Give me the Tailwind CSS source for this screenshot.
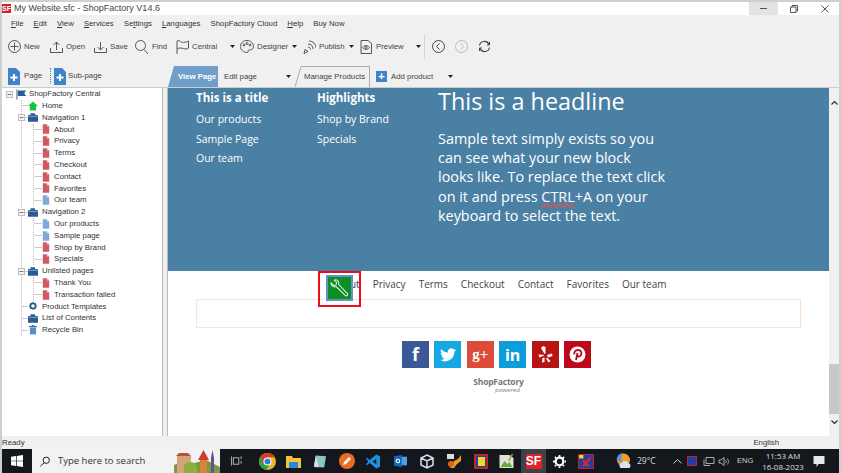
<!DOCTYPE html>
<html lang="en">
  <head>
    <meta charset="UTF-8" />
    <title>ShopFactory</title>
    <script src="https://cdn.jsdelivr.net/npm/@tailwindcss/browser@4"></script>
  </head>
  <body class="w-[841px] h-[473px] overflow-hidden bg-[#cfcfcf] font-['Liberation_Sans',sans-serif] text-[7.800px] text-[#333]">
    <svg class="hidden">
      <symbol id="red" viewBox="0 0 10 12"><path d="M1 0h5l3 3v9H1z" fill="#cf5a63"/><path d="M6 0v3h3z" fill="#f3c9cc"/></symbol>
      <symbol id="blue" viewBox="0 0 10 12"><path d="M1 0h5l3 3v9H1z" fill="#7fa9d8"/><path d="M6 0v3h3z" fill="#d5e3f3"/></symbol>
      <symbol id="folder" viewBox="0 0 12 10"><path d="M3 0h5l1 2h3v8H0V2h3z" fill="#2a5b93"/><path d="M0 3h12v1H0z" fill="#8fb1d6"/></symbol>
      <symbol id="minus" viewBox="0 0 9 9"><rect x=".5" y=".5" width="8" height="8" fill="#f4f4f4" stroke="#b0b0b0"/><path d="M2 4.500h5" stroke="#555"/></symbol>
      <symbol id="page" viewBox="0 0 12 18"><path d="M0 1h8l4 4v13H0z" fill="#3f83c8"/><path d="M6 7v7M2.500 10.500h7" stroke="#fff" stroke-width="2"/></symbol>
      <symbol id="drop" viewBox="0 0 5 3"><path d="M0 0h5L2.500 3z" fill="#222"/></symbol>
    </svg>

    <div class="h-[471px] mt-[2px] ml-[2px] flex flex-col bg-[#f0f0f0] w-[837px]">
      <!-- title bar -->
      <div class="h-[13px] shrink-0 bg-white flex items-center text-[9px] text-[#444]">
        <span class="w-[9px] h-[9px] bg-[#d3202a] text-white text-[7px] font-bold leading-[9px] text-center">SF</span>
        <span class="ml-[3px]">My Website.sfc - ShopFactory V14.6</span>
        <div class="ml-auto flex items-center h-full text-[#555]">
          <span class="w-[29px] h-full bg-[#e3e3e3] flex items-center justify-center"><span class="w-[7px] h-px bg-[#555]"></span></span>
          <svg class="w-[8px] h-[8px] ml-[12px]" viewBox="0 0 8 8"><path d="M.5 2h5.500v5.500H.5zM2 2V.5h5.500V6H6" fill="none" stroke="#555"/></svg>
          <svg class="w-[8px] h-[8px] ml-[23px] mr-[10px]" viewBox="0 0 8 8"><path d="M.5.5l7 7M7.500.5l-7 7" stroke="#555"/></svg>
        </div>
      </div>
      <!-- menu -->
      <div class="h-[18px] shrink-0 flex items-center gap-[10px] pl-[9px] text-[#333]">
        <span><u>F</u>ile</span><span><u>E</u>dit</span><span><u>V</u>iew</span><span><u>S</u>ervices</span><span>Se<u>t</u>tings</span><span><u>L</u>anguages</span><span>ShopFactory Cloud</span><span><u>H</u>elp</span><span>Buy Now</span>
      </div>
      <!-- toolbar -->
      <div class="h-[27px] shrink-0 flex items-center text-[#444] whitespace-nowrap">
        <svg class="w-[13px] h-[13px] ml-[6px]" viewBox="0 0 13 13" fill="none" stroke="#555"><circle cx="6.500" cy="6.500" r="6"/><path d="M6.500 2.500v8M2.500 6.500h8"/></svg>
        <span class="ml-[3px] w-[26px]">New</span>
        <svg class="w-[13px] h-[12px]" viewBox="0 0 13 12" fill="none" stroke="#555"><path d="M6.500 9V1M3.500 4l3-3 3 3M.5 7v4.500h12V7"/></svg>
        <span class="ml-[3px] w-[28px]">Open</span>
        <svg class="w-[13px] h-[12px]" viewBox="0 0 13 12" fill="none" stroke="#555"><path d="M6.500 1v8M3.500 6l3 3 3-3M.5 7v4.500h12V7"/></svg>
        <span class="ml-[3px] w-[25px]">Save</span>
        <svg class="w-[13px] h-[14px]" viewBox="0 0 13 14" fill="none" stroke="#555"><circle cx="5.500" cy="5.500" r="5"/><path d="M9 9.500l4 4.500"/></svg>
        <span class="ml-[4px] w-[24px]">Find</span>
        <svg class="w-[13px] h-[14px]" viewBox="0 0 13 14" fill="none" stroke="#555"><path d="M1 14V1c3-1.500 4 2 6.500 1.500S11 2 12.500 1v7c-2 1.500-3 1-5 .5S3 7.500 1 9"/></svg>
        <span class="ml-[3px] w-[38px]">Central</span>
        <svg class="w-[5px] h-[3px]"><use href="#drop"/></svg>
        <svg class="w-[14px] h-[13px] ml-[5px]" viewBox="0 0 14 13" fill="none" stroke="#555"><path d="M7 .5C3 .5.5 3 .5 6.500S3.500 12.500 7 12.500c1.500 0 1-2 1.500-2.500s4.500 1 5-3.500C13.500 3 10.500.5 7 .5z"/><circle cx="4" cy="5" r="1"/><circle cx="7" cy="3.500" r="1"/><circle cx="10" cy="5" r="1"/></svg>
        <span class="ml-[3px] w-[35px]">Designer</span>
        <svg class="w-[5px] h-[3px]"><use href="#drop"/></svg>
        <svg class="w-[13px] h-[14px] ml-[6px]" viewBox="0 0 13 14" fill="none" stroke="#555"><path d="M1 13.500l1-4 3 2zM5 4c3 0 5 2 5 5M6 1c4 0 7 3 7 7M5 7c1.500 0 2.500 1 2.500 2.500"/></svg>
        <span class="ml-[3px] w-[30px]">Publish</span>
        <svg class="w-[5px] h-[3px]"><use href="#drop"/></svg>
        <svg class="w-[12px] h-[14px] ml-[6px]" viewBox="0 0 12 14" fill="none" stroke="#555"><path d="M1 .5h7l3.500 3v10H1z"/><path d="M2.500 7.500c2-2.500 5-2.500 7 0-2 2.500-5 2.500-7 0z"/><circle cx="6" cy="7.500" r="1"/></svg>
        <span class="ml-[4px] w-[40px]">Preview</span>
        <svg class="w-[5px] h-[3px]"><use href="#drop"/></svg>
        <span class="w-px h-[25px] bg-[#d4d4d4] ml-[3px]"></span>
        <svg class="w-[13px] h-[13px] ml-[7px]" viewBox="0 0 13 13" fill="none" stroke="#444"><circle cx="6.500" cy="6.500" r="6"/><path d="M7.500 3.500l-3 3 3 3"/></svg>
        <svg class="w-[13px] h-[13px] ml-[10px]" viewBox="0 0 13 13" fill="none" stroke="#bbb"><circle cx="6.500" cy="6.500" r="6"/><path d="M5.500 3.500l3 3-3 3"/></svg>
        <svg class="w-[13px] h-[13px] ml-[10px]" viewBox="0 0 13 13" fill="none" stroke="#444" stroke-width="1.200"><path d="M1.500 5.500A5 5 0 0 1 11 4.500M11.500 7.500A5 5 0 0 1 2 8.500"/><path d="M11.500 2v3H9M1.500 11V8H4" stroke-width="1"/></svg>
      </div>
      <!-- page/tab row -->
      <div class="h-[28px] shrink-0 flex items-end whitespace-nowrap text-[#444] border-b border-[#ccc]">
        <div class="w-[166px] h-[27px] pt-[4px] flex items-center">
          <svg class="w-[12px] h-[18px] ml-[6px]"><use href="#page"/></svg>
          <span class="ml-[4px] w-[26px]">Page</span>
          <span class="h-[16px] w-[3px] border-l border-dotted border-[#3f83c8]"></span>
          <svg class="w-[12px] h-[18px] ml-[1px]"><use href="#page"/></svg>
          <span class="ml-[2px]">Sub-page</span>
        </div>
        <div class="flex-1 flex items-end h-[21px]">
          <span class="h-full w-[50px] pl-[10px] bg-[#6f9fc9] text-white font-bold flex items-center [clip-path:polygon(6px_0,100%_0,100%_100%,0_100%)]">View Page</span>
          <span class="ml-[6px] w-[62px] self-center">Edit page</span>
          <svg class="w-[5px] h-[3px] self-center"><use href="#drop"/></svg>
          <div class="ml-[4px] w-[75px] h-full flex">
            <svg class="w-[6px] h-[21px] shrink-0" viewBox="0 0 6 21" fill="none" stroke="#aaa"><path d="M0 21L6 .5"/></svg>
            <span class="flex-1 pl-[3px] border-t border-r border-[#aaa] flex items-center">Manage Products</span>
          </div>
          <span class="ml-[6px] w-[11px] h-[11px] self-center bg-[#3f83c8] text-white flex items-center justify-center font-bold text-[11px] leading-none">+</span>
          <span class="ml-[4px] w-[57px] self-center">Add product</span>
          <svg class="w-[5px] h-[3px] self-center"><use href="#drop"/></svg>
        </div>
      </div>
      <!-- main -->
      <div class="flex-1 flex min-h-0">
        <div class="w-[161px] bg-white border-r border-[#bbb] text-[#333] overflow-hidden whitespace-nowrap">
          <div class="flex items-center h-[12px] pl-[4px]"><svg class="w-[7px] h-[7px]"><use href="#minus"/></svg><svg class="w-[11px] h-[11px] ml-[3px]" viewBox="0 0 12 11"><path d="M1 0v11" stroke="#2a5b93"/><path d="M2 1h9l-2 3 2 3H2z" fill="#2a5b93"/></svg><span class="ml-[2px]">ShopFactory Central</span></div>
          <div class="ml-[19px] border-l border-dotted border-[#bbb]">
            <div class="flex items-center h-[11.800px]"><span class="w-[6px] h-px bg-[#ccc]"></span><svg class="w-[10px] h-[10px]" viewBox="0 0 11 10"><path d="M5.500 0L11 5H9v5H2V5H0z" fill="#17c53c"/></svg><span class="ml-[4px]">Home</span></div>
            <div class="flex items-center h-[11.800px] -ml-[4px]"><svg class="w-[7px] h-[7px]"><use href="#minus"/></svg><span class="w-[3px] h-px bg-[#ccc]"></span><svg class="w-[10px] h-[9px]"><use href="#folder"/></svg><span class="ml-[4px]">Navigation 1</span></div>
            <div class="ml-[11px] border-l border-dotted border-[#bbb]">
              <div class="flex items-center h-[11.800px]"><span class="w-[8px] h-px bg-[#ccc]"></span><svg class="w-[8px] h-[10px]"><use href="#red"/></svg><span class="ml-[4px]">About</span></div>
              <div class="flex items-center h-[11.800px]"><span class="w-[8px] h-px bg-[#ccc]"></span><svg class="w-[8px] h-[10px]"><use href="#red"/></svg><span class="ml-[4px]">Privacy</span></div>
              <div class="flex items-center h-[11.800px]"><span class="w-[8px] h-px bg-[#ccc]"></span><svg class="w-[8px] h-[10px]"><use href="#red"/></svg><span class="ml-[4px]">Terms</span></div>
              <div class="flex items-center h-[11.800px]"><span class="w-[8px] h-px bg-[#ccc]"></span><svg class="w-[8px] h-[10px]"><use href="#red"/></svg><span class="ml-[4px]">Checkout</span></div>
              <div class="flex items-center h-[11.800px]"><span class="w-[8px] h-px bg-[#ccc]"></span><svg class="w-[8px] h-[10px]"><use href="#red"/></svg><span class="ml-[4px]">Contact</span></div>
              <div class="flex items-center h-[11.800px]"><span class="w-[8px] h-px bg-[#ccc]"></span><svg class="w-[8px] h-[10px]"><use href="#red"/></svg><span class="ml-[4px]">Favorites</span></div>
              <div class="flex items-center h-[11.800px]"><span class="w-[8px] h-px bg-[#ccc]"></span><svg class="w-[8px] h-[10px]"><use href="#blue"/></svg><span class="ml-[4px]">Our team</span></div>
            </div>
            <div class="flex items-center h-[11.800px] -ml-[4px]"><svg class="w-[7px] h-[7px]"><use href="#minus"/></svg><span class="w-[3px] h-px bg-[#ccc]"></span><svg class="w-[10px] h-[9px]"><use href="#folder"/></svg><span class="ml-[4px]">Navigation 2</span></div>
            <div class="ml-[11px] border-l border-dotted border-[#bbb]">
              <div class="flex items-center h-[11.800px]"><span class="w-[8px] h-px bg-[#ccc]"></span><svg class="w-[8px] h-[10px]"><use href="#blue"/></svg><span class="ml-[4px]">Our products</span></div>
              <div class="flex items-center h-[11.800px]"><span class="w-[8px] h-px bg-[#ccc]"></span><svg class="w-[8px] h-[10px]"><use href="#blue"/></svg><span class="ml-[4px]">Sample page</span></div>
              <div class="flex items-center h-[11.800px]"><span class="w-[8px] h-px bg-[#ccc]"></span><svg class="w-[8px] h-[10px]"><use href="#red"/></svg><span class="ml-[4px]">Shop by Brand</span></div>
              <div class="flex items-center h-[11.800px]"><span class="w-[8px] h-px bg-[#ccc]"></span><svg class="w-[8px] h-[10px]"><use href="#red"/></svg><span class="ml-[4px]">Specials</span></div>
            </div>
            <div class="flex items-center h-[11.800px] -ml-[4px]"><svg class="w-[7px] h-[7px]"><use href="#minus"/></svg><span class="w-[3px] h-px bg-[#ccc]"></span><svg class="w-[10px] h-[9px]"><use href="#folder"/></svg><span class="ml-[4px]">Unlisted pages</span></div>
            <div class="ml-[11px] border-l border-dotted border-[#bbb]">
              <div class="flex items-center h-[11.800px]"><span class="w-[8px] h-px bg-[#ccc]"></span><svg class="w-[8px] h-[10px]"><use href="#red"/></svg><span class="ml-[4px]">Thank You</span></div>
              <div class="flex items-center h-[11.800px]"><span class="w-[8px] h-px bg-[#ccc]"></span><svg class="w-[8px] h-[10px]"><use href="#red"/></svg><span class="ml-[4px]">Transaction failed</span></div>
            </div>
            <div class="flex items-center h-[11.800px]"><span class="w-[6px] h-px bg-[#ccc]"></span><svg class="w-[8px] h-[8px] mx-[1px]" viewBox="0 0 9 9"><circle cx="4.500" cy="4.500" r="3" fill="none" stroke="#2a5b93" stroke-width="2"/><path d="M4.500 0v9M0 4.500h9M1.300 1.300l6.400 6.400M7.700 1.300l-6.400 6.400" stroke="#2a5b93" stroke-dasharray="1.200 6"/></svg><span class="ml-[4px]">Product Templates</span></div>
            <div class="flex items-center h-[11.800px]"><span class="w-[6px] h-px bg-[#ccc]"></span><svg class="w-[10px] h-[9px]"><use href="#folder"/></svg><span class="ml-[4px]">List of Contents</span></div>
            <div class="flex items-center h-[11.800px]"><span class="w-[6px] h-px bg-[#ccc]"></span><svg class="w-[8px] h-[10px] mx-[1px]" viewBox="0 0 9 10"><path d="M1 2h7v8H1z" fill="#5c8fc0"/><path d="M0 1h9M3 0h3" stroke="#2a5b93"/></svg><span class="ml-[4px]">Recycle Bin</span></div>
          </div>
        </div>
        <div class="w-[5px] bg-[#f0f0f0] border-r border-[#bbb]"></div>
        <!-- preview -->
        <div class="flex-1 bg-white flex font-['Open_Sans',sans-serif] min-w-0">
          <div class="flex-1 min-w-0 relative">
            <div class="h-[183px] bg-[#4a80a4] text-white flex pl-[28px] text-[10.500px]">
              <div class="w-[121px] pt-[2px] flex flex-col">
                <b class="text-[11.500px] leading-[16px] mb-[4px]">This is a title</b>
                <span class="leading-[19.500px]">Our products</span><span class="leading-[19.500px]">Sample Page</span><span class="leading-[19.500px]">Our team</span>
              </div>
              <div class="w-[121px] pt-[2px] flex flex-col">
                <b class="text-[11.500px] leading-[16px] mb-[4px]">Highlights</b>
                <span class="leading-[19.500px]">Shop by Brand</span><span class="leading-[19.500px]">Specials</span>
              </div>
              <div class="w-[240px]">
                <div class="text-[23.400px] leading-[26px] mb-[15px]">This is a headline</div>
                <div class="text-[14.400px] leading-[19.200px] whitespace-nowrap">Sample text simply exists so you<br>can see what your new block<br>looks like. To replace the text click<br>on it and press <span class="underline decoration-wavy decoration-[#e25050]">CTRL</span>+A on your<br>keyboard to select the text.</div>
              </div>
            </div>
            <div class="flex justify-center items-center h-[28px] pb-[2px] pl-[1px] gap-[13px] text-[10px] text-[#444] whitespace-nowrap">
              <span>About</span><span>Privacy</span><span>Terms</span><span>Checkout</span><span>Contact</span><span>Favorites</span><span>Our team</span>
            </div>
            <div class="h-[29px] mx-[28px] border border-[#fbe3cf]"></div>
            <div class="flex justify-center gap-[5.400px] mt-[13px] pr-[4px]">
              <span class="w-[27px] h-[27px] bg-[#3b5998] flex items-center justify-center text-white font-bold text-[18px]">f</span>
              <span class="w-[27px] h-[27px] bg-[#14a9e3] flex items-center justify-center"><svg class="w-[16px] h-[14px]" viewBox="0 0 24 20"><path d="M24 2.400c-.9.400-1.800.7-2.800.8 1-.6 1.800-1.600 2.200-2.700-1 .6-2 1-3.100 1.200A4.900 4.900 0 0 0 11.900 6.200C7.800 6 4.200 4 1.700.9c-1.300 2.200-.7 5.100 1.500 6.600-.8 0-1.600-.2-2.200-.6 0 2.300 1.600 4.400 3.900 4.900-.7.200-1.500.2-2.200.1.600 2 2.400 3.400 4.600 3.400A9.900 9.900 0 0 1 0 17.300 14 14 0 0 0 21.500 4.900c1-.7 1.900-1.500 2.500-2.500z" fill="#fff"/></svg></span>
              <span class="w-[27px] h-[27px] bg-[#dd4b39] flex items-center justify-center text-white font-bold text-[15px] font-['Liberation_Serif',serif]">g+</span>
              <span class="w-[27px] h-[27px] bg-[#0e9ddb] flex items-center justify-center text-white font-bold text-[16px]">in</span>
              <span class="w-[27px] h-[27px] bg-[#b81414] flex items-center justify-center"><svg class="w-[15px] h-[17px]" viewBox="0 0 15 17" fill="#fff"><path d="M5 0l2.500 1v6.500L6.500 8 3 2zM9 9l5-1.500.5 2.500-4.500 1.500zM9 11.500l3.500 3.500-2 1.500-2.500-4zM6.500 11.500V16l-2.500.5.500-4.500zM6 9.500l-4.500 2L.5 8.500l5 .2z"/></svg></span>
              <span class="w-[27px] h-[27px] bg-[#bd081c] flex items-center justify-center"><svg class="w-[17px] h-[17px]" viewBox="0 0 17 17"><circle cx="8.500" cy="8.500" r="8" fill="#fff"/><path d="M7 14l1.500-7M5.500 8.500C4.500 6 6.500 4 9 4s3.800 1.800 3.300 4-2.300 3.300-3.800 2" fill="none" stroke="#bd081c" stroke-width="1.800"/></svg></span>
            </div>
            <div class="flex flex-col items-center mt-[10px] text-[#777] leading-none">
              <b class="text-[8.500px] tracking-tight">ShopFactory</b>
              <span class="text-[6px] pl-[18px]">powered</span>
            </div>
            <!-- highlighted wrench icon over the nav -->
            <div class="absolute left-[150px] top-[183px] w-[43px] h-[36px] border-[2px] border-[#e8101c] flex items-center justify-center">
              <span class="w-[27px] h-[26px] -mt-[2px] bg-[#0d8f23] border-2 border-[#5e95cc] flex items-center justify-center">
                <svg class="w-[19px] h-[19px]" viewBox="0 0 17 17" fill="none" stroke="#e8f5e8" stroke-width=".9"><path d="M1 3.500L3.500 6l2-1 .5-2L3.800 1C5.500.2 7.500 1.200 7.800 3c.1.700 0 1.200-.2 1.700l8 8.300c.8 1-.8 2.700-1.800 1.800L5.500 6.800C3.200 7.500 .6 6 1 3.500z"/></svg>
              </span>
            </div>
          </div>
          <!-- scrollbar -->
          <div class="w-[10px] bg-[#f0f0f0] flex flex-col items-center justify-between">
            <svg class="w-[7px] h-[4px] mt-[13px]" viewBox="0 0 7 4" fill="none" stroke="#333" stroke-width="1.200"><path d="M.5 3.500l3-3 3 3"/></svg>
            <div class="flex-1"></div>
            <div class="w-full h-[50px] bg-[#c8c8c8]"></div>
            <svg class="w-[7px] h-[4px] mt-[6px] mb-[12px]" viewBox="0 0 7 4" fill="none" stroke="#333" stroke-width="1.200"><path d="M.5.500l3 3 3-3"/></svg>
          </div>
        </div>
      </div>
      <!-- status -->
      <div class="h-[13px] shrink-0 flex items-center justify-between text-[#333] pr-[60px]"><span>Ready</span><span>English</span></div>
      <!-- taskbar -->
      <div class="h-[24px] shrink-0 bg-[#14181d] flex items-center text-white text-[9px] whitespace-nowrap">
        <span class="w-[30px] flex justify-center"><svg class="w-[12px] h-[12px]" viewBox="0 0 12 12" fill="#fff"><path d="M0 1.700l5-.7v4.700H0zM5.700.9L12 0v5.700H5.700zM0 6.300h5V11l-5-.7zM5.700 6.300H12V12l-6.300-.9z"/></svg></span>
        <div class="w-[188px] h-full bg-[#f2f2f2] flex items-center text-[#333] text-[9.500px] relative overflow-hidden">
          <svg class="w-[10px] h-[11px] ml-[8px]" viewBox="0 0 12 12" fill="none" stroke="#222" stroke-width="1.200"><circle cx="7.500" cy="4.500" r="3.800"/><path d="M5 7.500L.5 11.500"/></svg>
          <span class="ml-[8px] font-['Open_Sans',sans-serif]">Type here to search</span>
          <svg class="absolute right-0 bottom-0 w-[46px] h-[24px]" viewBox="0 0 46 24"><path d="M0 24V16l8-4 12 2 12-3 14 7v8z" fill="#7b9a45"/><path d="M3 24V7h14v5h-3v12z" fill="#d0a47c"/><path d="M2 7l3-3h9l3 3z" fill="#b8513a"/><path d="M26 24V11h7v13z" fill="#d9823f"/><path d="M24 11l5.500-10L35 11z" fill="#c5402e"/><path d="M37 24V9h3v15z" fill="#6a4f95"/><path d="M37 9l1.500-8L40 9z" fill="#5c4a8a"/><path d="M10 24v-8l5-4 7 3 2 9z" fill="#8fae3c"/></svg>
        </div>
        <svg class="w-[11px] h-[10px] ml-[11px]" viewBox="0 0 12 10" fill="none" stroke="#bbb"><rect x="2.500" y="1.500" width="6" height="7"/><path d="M.5 0v10M11 0v3M11 5v3"/></svg>
        <svg class="w-[17px] h-[17px] ml-[17px]" viewBox="0 0 16 16"><circle cx="8" cy="8" r="8" fill="#e8b82a"/><path d="M8 0a8 8 0 0 0-6.900 4L4.500 10 8 4h6.900A8 8 0 0 0 8 0z" fill="#d93a2e"/><path d="M1.100 4A8 8 0 0 0 7 15.900L10.500 10H4.800z" fill="#2f9e44"/><circle cx="8" cy="8" r="3.300" fill="#2f7de1" stroke="#fff"/></svg>
        <svg class="w-[15px] h-[13px] ml-[10px]" viewBox="0 0 15 13"><path d="M0 1h6l1 2h8v10H0z" fill="#f3c33a"/><path d="M3 7h9v6H3z" fill="#2a88d8"/></svg>
        <svg class="w-[14px] h-[15px] ml-[12px]" viewBox="0 0 15 15"><path d="M3 1l11 1-2 12-11-1z" fill="#8cc6c0"/><path d="M3 1l3 13-5-1z" fill="#dde"/></svg>
        <svg class="w-[16px] h-[16px] ml-[12px]" viewBox="0 0 16 16"><circle cx="8" cy="8" r="8" fill="#ee6a24"/><path d="M4 12l1-3 5-5 2 2-5 5z" fill="#fff"/></svg>
        <svg class="w-[14px] h-[15px] ml-[11px]" viewBox="0 0 15 15"><path d="M11 0l4 2v11l-4 2-7-6-3 2.500L0 10.500 2.500 7.500 0 4.500 1 3.500 4 6z" fill="#1e8fe0"/><path d="M11 4.500L7 7.500l4 3z" fill="#14181d"/></svg>
        <svg class="w-[13px] h-[14px] ml-[14px]" viewBox="0 0 15 14"><path d="M5 2h10v10H5z" fill="#4aa3e0"/><path d="M0 1.500L9 0v14l-9-1.500z" fill="#0f6cbd"/><circle cx="4.500" cy="7" r="2" fill="none" stroke="#fff" stroke-width="1.300"/></svg>
        <svg class="w-[14px] h-[15px] ml-[13px]" viewBox="0 0 14 15" fill="none" stroke="#cfe0ee" stroke-width="1.500"><path d="M7 1l6 3v7l-6 3-6-3V4zM1 4l6 3 6-3M7 7v7"/></svg>
        <svg class="w-[17px] h-[15px] ml-[12px]" viewBox="0 0 15 15"><path d="M0 0h7v5H0z" fill="#ddd"/><path d="M3 14l4-7 4-2 3-4v6l-4 3-3 4z" fill="#f09a25"/><circle cx="4" cy="10" r="3" fill="#e0661c"/></svg>
        <span class="ml-[11px] w-[14px] h-[15px] border-2 border-[#c8202a] bg-[#1d3fa8] flex items-center justify-center"><span class="w-[7px] h-[9px] bg-[#ecd82b]"></span></span>
        <svg class="w-[15px] h-[14px] ml-[11px]" viewBox="0 0 14 14"><path d="M0 1h10l4 3v10H0z" fill="#dfe3d6"/><path d="M1 13l4-6 3 3 2-2 3 5z" fill="#6aa845"/><path d="M9 7l4-7" stroke="#b3a02c" stroke-width="1.500"/></svg>
        <span class="ml-[7px] w-[25px] h-full bg-[#3e4247] flex items-center justify-center"><span class="bg-[#e0202a] text-white font-bold text-[12px] leading-[15px] w-[16px] text-center font-['Liberation_Sans',sans-serif]">SF</span></span>
        <svg class="w-[13px] h-[13px] ml-[7px]" viewBox="0 0 13 13"><circle cx="6.500" cy="6.500" r="3.800" fill="none" stroke="#fff" stroke-width="2.200"/><path d="M6.500 0v13M0 6.500h13M1.900 1.900l9.200 9.200M11.100 1.900l-9.200 9.200" stroke="#fff" stroke-width="1.800" stroke-dasharray="2 9.500"/></svg>
        <span class="ml-[12px] w-[16px] h-[15px] bg-[#1d3fa8] border border-[#c8202a] block"><svg class="w-full h-full" viewBox="0 0 16 15"><path d="M0 0h5v4H0z" fill="#ecd82b"/><path d="M3 13L12 2l2 2-7 9z" fill="#d8262c"/><path d="M5 5l8 8H9L4 8z" fill="#d8262c"/></svg></span>
        <svg class="w-[18px] h-[16px] ml-[22px]" viewBox="0 0 17 16"><circle cx="7" cy="7" r="6.500" fill="#f1a02a"/><path d="M0 7a7 7 0 0 1 7-7c-3 3-3 8 1 11z" fill="#5d96cf"/><path d="M4 15a3 3 0 0 1 1-5 4 4 0 0 1 7 0 3 3 0 0 1 1 5z" fill="#d6e4f2"/></svg>
        <span class="ml-[3px] font-['Open_Sans',sans-serif] text-[8.500px] text-[#ddd] w-[19px]">29°C</span>
        <svg class="w-[9px] h-[5px] ml-[17px]" viewBox="0 0 9 5" fill="none" stroke="#ccc"><path d="M.5 4.500l4-4 4 4"/></svg>
        <span class="ml-[5px] w-[10px] h-[10px] bg-[#1d3fa8] border border-[#c8202a] block"></span>
        <svg class="w-[12px] h-[9px] ml-[6px]" viewBox="0 0 11 9" fill="none" stroke="#aaa"><path d="M2.500.5h8v6h-8zM.5 2.500v6h6"/></svg>
        <svg class="w-[12px] h-[9px] ml-[3px]" viewBox="0 0 11 9" fill="none" stroke="#aaa"><path d="M.5 3v3h2l3 2.500V.5l-3 2.500zM7 3c1 1 1 2 0 3M8.500 1.500c2 2 2 4 0 6"/></svg>
        <span class="ml-[7px] w-[15px] text-[7.500px] text-[#ccc]">ENG</span>
        <div class="ml-[12px] w-[38px] flex flex-col items-center font-['Open_Sans',sans-serif] text-[8px] leading-[11px] text-[#ddd]"><span>11:53 AM</span><span>16-08-2023</span></div>
        <svg class="w-[12px] h-[11px] ml-[11px]" viewBox="0 0 11 11"><path d="M0 0h11v8H5l-2 3V8H0z" fill="#e8e8e8"/></svg>
      </div>
    </div>
  </body>
</html>
